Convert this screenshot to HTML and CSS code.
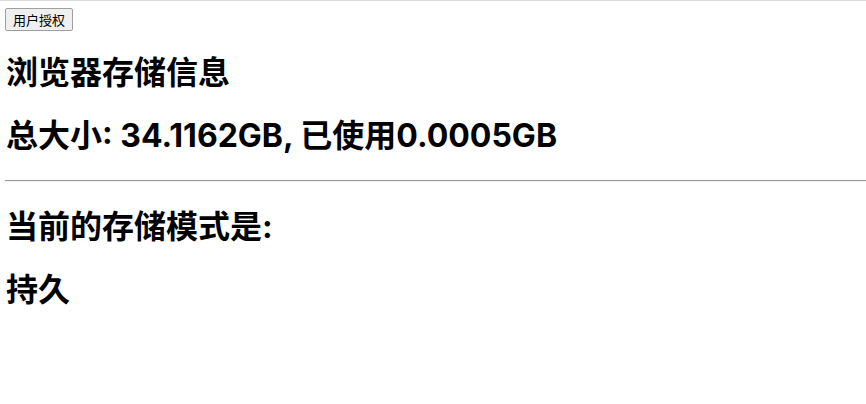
FILE: index.html
```html
<!DOCTYPE html>
<html lang="zh-CN">
<head>
  <meta charset="UTF-8">
  <title>浏览器存储信息</title>
  <link rel="stylesheet" href="styles.css">
</head>
<body>
  <button class="auth-btn" type="button">用户授权</button>
  <h1 class="title">浏览器存储信息</h1>
  <h1 class="title">总大小: 34.1162GB, 已使用0.0005GB</h1>
  <hr class="divider">
  <h1 class="title">当前的存储模式是:</h1>
  <h1 class="title">持久</h1>
</body>
</html>
```

FILE: styles.css
```css
html {
  border-top: 1px solid #dcdcdc;
}

body {
  margin: 7px 0 0 5px;
  font-family: Inter, "Noto Sans CJK SC", sans-serif;
  color: #000;
  background: #fff;
}

.auth-btn {
  font-family: "Noto Sans CJK SC", sans-serif;
  font-size: 13px;
  line-height: 17px;
  padding: 2px 7px;
  margin: 0;
  border: 1px solid #a0a0a0;
  border-radius: 2px;
  background-color: #efefef;
  color: #000;
}

.title {
  font-size: 32px;
  font-weight: bold;
  line-height: 42px;
  margin: 21px 0;
  padding-left: 1px;
}

.divider {
  margin: 23px 0 24px;
  border: none;
  border-top: 1px solid #9a9a9a;
  border-bottom: 1px solid #eeeeee;
}
```
